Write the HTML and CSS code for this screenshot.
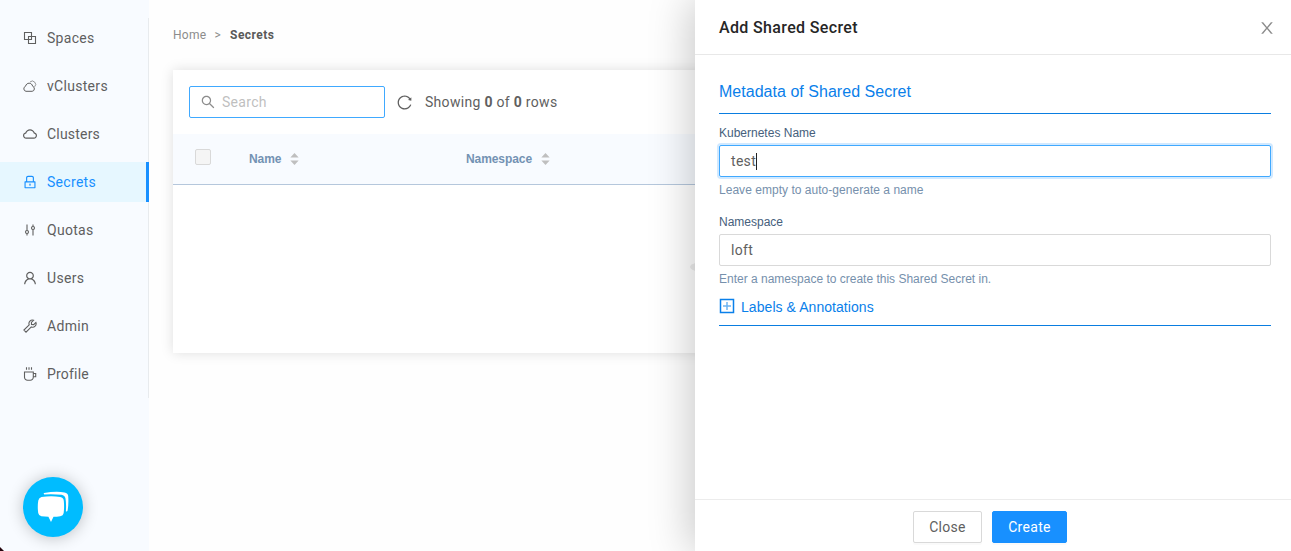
FILE: index.html
```html
<!DOCTYPE html>
<html lang="en">
<head>
<meta charset="utf-8">
<title>Secrets</title>
<link rel="stylesheet" href="styles.css">
</head>
<body>
<div class="app">
  <aside class="sidebar">
    <nav class="menu">
      <a class="item"><svg class="icon line" viewBox="0 0 14 14"><path d="M1.500 1.500h7v7h-7zM5.500 5.500h7v7h-7z"/></svg><span>Spaces</span></a>
      <a class="item"><svg class="icon line thin" viewBox="0 0 14 14"><path d="M3 12.300a2.600 2.600 0 0 1-.5-5C3 5.300 4.400 4.200 6.100 4.200s3.100 1.100 3.600 3.100a2.600 2.600 0 0 1-.5 5z"/><path class="faint" d="M7 3a3.200 3.200 0 1 1 4.600 4.800"/></svg><span>vClusters</span></a>
      <a class="item"><svg class="icon" viewBox="64 64 896 896"><path d="M811.4 418.7C765.6 297.9 648.9 212 512.2 212S258.8 297.8 213 418.6C127.3 441.1 64 519.1 64 612c0 110.500 89.500 200 199.900 200h496.200C870.500 812 960 722.500 960 612c0-92.700-63.100-170.700-148.600-193.300zm36.300 281a123.070 123.070 0 0 1-87.600 36.300H263.900c-33.100 0-64.200-12.900-87.600-36.300A123.300 123.300 0 0 1 140 612c0-28 9.100-54.300 26.200-76.300a125.700 125.700 0 0 1 66.100-43.700l37.900-9.900 13.900-36.600c8.600-22.800 20.600-44.100 35.700-63.400a245.600 245.600 0 0 1 52.400-49.900c41.100-28.900 89.500-44.200 140-44.200s98.900 15.300 140 44.200c19.900 14 37.500 30.800 52.400 49.900 15.100 19.300 27.100 40.700 35.700 63.400l13.800 36.500 37.800 10c54.300 14.500 92.100 63.800 92.100 120 0 33.100-12.900 64.300-36.300 87.700z"/></svg><span class="tight">Clusters</span></a>
      <a class="item active"><svg class="icon" viewBox="64 64 896 896"><path d="M832 464h-68V240c0-70.700-57.300-128-128-128H388c-70.700 0-128 57.300-128 128v224h-68c-17.700 0-32 14.300-32 32v384c0 17.700 14.300 32 32 32h640c17.700 0 32-14.300 32-32V496c0-17.700-14.300-32-32-32zM332 240c0-30.900 25.100-56 56-56h248c30.900 0 56 25.100 56 56v224H332V240zm460 600H232V536h560v304zM484 701v53c0 4.400 3.600 8 8 8h40c4.400 0 8-3.600 8-8v-53a48.010 48.010 0 1 0-56 0z"/></svg><span>Secrets</span></a>
      <a class="item"><svg class="icon line" viewBox="0 0 14 14"><path d="M4 1.500v6M4 10.500v2M10 1.500v2M10 6.500v6"/><circle cx="4" cy="9" r="1.500"/><circle cx="10" cy="5" r="1.500"/></svg><span>Quotas</span></a>
      <a class="item"><svg class="icon" viewBox="64 64 896 896"><path d="M858.500 763.600a374 374 0 0 0-80.600-119.500 375.630 375.630 0 0 0-119.500-80.600c-.4-.2-.8-.3-1.200-.5C719.500 518 760 444.700 760 362c0-137-111-248-248-248S264 225 264 362c0 82.700 40.500 156 102.800 201.100-.4.2-.8.3-1.200.5-44.800 18.900-85 46-119.500 80.600a375.630 375.630 0 0 0-80.600 119.500A371.700 371.700 0 0 0 136 901.800a8 8 0 0 0 8 8.200h60c4.400 0 7.900-3.500 8-7.800 2-77.200 33-149.500 87.800-204.300 56.700-56.700 132-87.900 212.200-87.900s155.500 31.200 212.200 87.900C779 752.700 810 825 812 902.200c.1 4.400 3.600 7.800 8 7.800h60a8 8 0 0 0 8-8.200c-1-47.800-10.900-94.300-29.500-138.200zM512 534c-45.900 0-89.100-17.900-121.600-50.400S340 407.900 340 362c0-45.900 17.900-89.100 50.400-121.600S466.100 190 512 190s89.100 17.900 121.600 50.400S684 316.100 684 362c0 45.900-17.900 89.100-50.400 121.600S557.900 534 512 534z"/></svg><span>Users</span></a>
      <a class="item"><svg class="icon line" viewBox="0 0 14 14"><path d="M10.600 1.200a3.500 3.500 0 0 0-4.400 4.600L.9 11.100l2.100 2.100 5.300-5.300a3.500 3.500 0 0 0 4.600-4.500l-2.200 2.200-2.200-.1-.1-2.100z"/></svg><span>Admin</span></a>
      <a class="item"><svg class="icon line" viewBox="0 0 14 14"><path d="M1.500 5h8.800v5.200a3 3 0 0 1-3 3H4.500a3 3 0 0 1-3-3zM10.500 6.500h2.200v3.200h-2.200M3.500.2v2.600M6 .2v2.600M8.500.2v2.600"/></svg><span class="tight">Profile</span></a>
    </nav>
    <button class="chat" aria-label="Chat">
      <svg viewBox="0 0 60 60"><path d="M21 16q12-2.200 20.500-.6Q45 16 45.200 19q.6 8-.6 14.600-.7 1.400-1.700.6.500-7.200-.4-12.600-.7-3.400-4-3.800-8.500-1-17.200-.4-1-.8-.3-1.400z"/><path d="M18.500 20q10-1.500 18.700 0 3.300.5 3.600 3.700.6 6.300-.1 12-.5 3-3.500 3.500-3.400.5-6.700.6L28 45l-2.600-5.200-7-.5q-2.700-.4-3.200-3.300-.9-6.500.1-12.500.6-3 3.200-3.500z"/></svg>
    </button>
    <i class="corner"></i>
  </aside>

  <main class="main">
    <div class="crumbs"><span>Home</span><span class="sep">&gt;</span><b>Secrets</b></div>
    <section class="card">
      <div class="toolbar">
        <div class="search"><svg viewBox="64 64 896 896"><path d="M909.600 854.500L649.900 594.800C690.200 542.700 712 479 712 412c0-80.200-31.300-155.400-87.900-212.100-56.600-56.700-132-87.900-212.100-87.900s-155.500 31.300-212.100 87.900C143.200 256.500 112 331.800 112 412c0 80.100 31.300 155.500 87.900 212.100C256.500 680.800 331.800 712 412 712c67 0 130.600-21.800 182.700-62l259.700 259.600a8.200 8.200 0 0 0 11.600 0l43.600-43.500a8.200 8.200 0 0 0 0-11.600zM570.400 570.400C528 612.700 471.800 636 412 636s-116-23.300-158.400-65.600C211.300 528 188 471.800 188 412s23.300-116.100 65.600-158.400C296 211.300 352.200 188 412 188s116.100 23.200 158.400 65.600S636 352.200 636 412s-23.300 116.100-65.600 158.400z"/></svg><span>Search</span></div>
        <svg class="reload" viewBox="64 64 896 896"><path d="M909.100 209.300l-56.400 44.100C775.800 155.100 656.200 92 521.900 92 290 92 102.300 279.500 102 511.500 101.700 743.700 289.800 932 521.900 932c181.300 0 335.800-115 394.600-276.100 1.500-4.200-.7-8.900-4.900-10.300l-56.700-19.500a8 8 0 0 0-10.100 4.800c-1.800 5-3.800 10-5.900 14.900-17.300 41-42.100 77.800-73.700 109.400A344.770 344.770 0 0 1 655.900 829c-42.300 17.900-87.400 27-133.800 27-46.500 0-91.500-9.100-133.800-27A341.500 341.500 0 0 1 279 755.200a342.160 342.160 0 0 1-73.700-109.400c-17.900-42.400-27-87.400-27-133.900s9.100-91.500 27-133.900c17.300-41 42.100-77.800 73.700-109.400 31.600-31.600 68.400-56.400 109.300-73.800 42.300-17.900 87.400-27 133.800-27 46.500 0 91.500 9.100 133.800 27a341.500 341.500 0 0 1 109.300 73.800c9.900 9.900 19.200 20.400 27.800 31.400l-60.200 47a8 8 0 0 0 3 14.100l175.600 43c5 1.200 9.900-2.600 9.900-7.700l.8-180.900c-.1-6.600-7.800-10.300-13-6.200z"/></svg>
        <span class="count">Showing <b>0</b> of <b>0</b> rows</span>
      </div>
      <div class="thead">
        <i class="check"></i>
        <div class="col name"><span>Name</span><svg class="sort" viewBox="0 0 9 13"><path d="M4.500 0L9 5H0zM4.500 13L0 8h9z"/></svg></div>
        <div class="col ns"><span>Namespace</span><svg class="sort" viewBox="0 0 9 13"><path d="M4.500 0L9 5H0zM4.500 13L0 8h9z"/></svg></div>
      </div>
      <div class="empty"><svg viewBox="0 0 64 20"><ellipse cx="32" cy="10" rx="32" ry="7"/></svg></div>
    </section>
  </main>

  <section class="drawer">
    <header class="head"><h1>Add Shared Secret</h1><svg viewBox="64 64 896 896"><path d="M563.800 512l262.500-312.900c4.400-5.200.7-13.100-6.100-13.100h-79.800c-4.700 0-9.200 2.100-12.300 5.700L511.600 449.800 295.100 191.700c-3-3.600-7.500-5.700-12.300-5.700H203c-6.800 0-10.500 7.900-6.100 13.100L459.400 512 196.900 824.900A7.950 7.950 0 0 0 203 838h79.800c4.700 0 9.200-2.100 12.300-5.700l216.500-258.100 216.500 258.100c3 3.600 7.500 5.700 12.300 5.700h79.800c6.800 0 10.500-7.900 6.100-13.100L563.800 512z"/></svg></header>
    <div class="body">
      <h2>Metadata of Shared Secret</h2>
      <label>Kubernetes Name</label>
      <div class="field focus"><span>test</span><i class="caret"></i></div>
      <p class="help leave">Leave empty to auto-generate a name</p>
      <label class="second">Namespace</label>
      <div class="field"><span>loft</span></div>
      <p class="help">Enter a namespace to create this Shared Secret in.</p>
      <div class="labels"><svg viewBox="0 0 16 16"><path d="M1.500 1.500h13v13h-13z"/><path class="plus" d="M8 4v8M4 8h8"/></svg><span>Labels &amp; Annotations</span></div>
    </div>
    <footer class="foot"><button class="btn">Close</button><button class="btn primary">Create</button></footer>
  </section>
</div>
</body>
</html>
```
FILE: styles.css
```css
* { box-sizing: border-box; }
body { margin: 0; font: 14px/20px Roboto, sans-serif; letter-spacing: .3px; color: #5f5f5f; background: #fefefe; overflow: hidden; }
h1, h2, p { margin: 0; font-weight: 400; }
button { font: inherit; letter-spacing: inherit; color: inherit; }
svg { display: block; fill: currentColor; flex: none; }

.app { display: grid; grid-template-columns: 149px 546px 596px; width: 1291px; height: 551px; overflow: hidden; }

.sidebar { position: relative; padding-top: 18px; background: #f8fbff; }
.menu { display: flex; flex-direction: column; gap: 8px; height: 380px; border-right: 1px solid #e8ebee; }
.item { display: flex; align-items: center; gap: 10px; height: 40px; padding-left: 23px; margin-right: -1px; }
.item.active { color: #1890ff; background: #e6f7ff; border-right: 3px solid #1890ff; }
.tight { letter-spacing: .2px; }
.icon { width: 14px; height: 14px; }
.line { fill: none; stroke: currentColor; stroke-width: 1.1; }
.thin { stroke-width: 1; }
.faint { opacity: .65; }
.chat { position: absolute; left: 23px; top: 477px; width: 60px; height: 60px; padding: 0; border: 0; border-radius: 50%; background: #00bcff; color: #fff; box-shadow: 0 1px 16px rgba(0, 0, 0, .24); }
.corner { position: absolute; left: 0; bottom: 0; border-left: 4px solid #24050d; border-top: 4px solid transparent; }

.main { padding: 25px 0 0 24px; }
.crumbs { display: flex; font-size: 12px; color: #8c8c8c; }
.crumbs .sep { margin: 0 8px; }
.crumbs b { margin-left: 1px; font-weight: 700; letter-spacing: .45px; color: #595959; }
.card { width: 1094px; height: 283px; margin-top: 25px; background: #fff; box-shadow: 0 0 12px rgba(0, 0, 0, .13); }
.toolbar { display: flex; align-items: center; height: 64px; padding-left: 16px; }
.search { display: flex; align-items: center; gap: 7px; width: 196px; height: 32px; padding-left: 11px; border: 1px solid #40a9ff; border-radius: 2px; color: #bfbfbf; }
.search svg { width: 14px; height: 14px; color: #8c8c8c; }
.reload { width: 15px; height: 15px; margin: 0 13px 0 12px; }
.count b { font-weight: 700; }
.thead { display: flex; height: 51px; padding: 15px 0 0 22px; background: #f8fbff; border-bottom: 1px solid #b5c7dc; font: 700 12px/20px "Liberation Sans", sans-serif; letter-spacing: -.08px; color: #7392b3; }
.check { width: 16px; height: 16px; border: 1px solid #d9d9d9; border-radius: 2px; background: #f5f5f5; }
.col { display: flex; align-items: center; gap: 9px; height: 20px; }
.name { width: 217px; margin-left: 38px; }
.sort { width: 9px; height: 12px; color: #bfbfbf; }
.empty { display: flex; justify-content: center; padding-top: 72px; }
.empty svg { width: 64px; height: 20px; margin-left: 4px; color: #ededed; }

.drawer { z-index: 1; display: flex; flex-direction: column; background: #fff; box-shadow: -4px 0 40px rgba(0, 0, 0, .22); }
.head { display: flex; align-items: center; justify-content: space-between; height: 55px; padding: 0 16px 0 24px; border-bottom: 1px solid #e8e8e8; }
.head h1 { padding-top: 2px; font-size: 16px; font-weight: 500; letter-spacing: .35px; color: #262626; }
.head svg { width: 16px; height: 16px; margin: 2px 0 0; color: #8c8c8c; }
.body { flex: 1; padding: 24px 20px 0 24px; font-family: "Liberation Sans", sans-serif; letter-spacing: 0; }
.body h2 { height: 35px; padding-top: 2px; border-bottom: 1px solid #0a7de0; font-size: 16px; line-height: 22px; letter-spacing: .03px; color: #0a80ea; }
.body label { display: block; margin-top: 9px; height: 22px; font-size: 12px; line-height: 20px; color: #46607c; }
.body .second { margin-top: 12px; }
.field { display: flex; align-items: center; width: 552px; height: 32px; padding-left: 11px; border: 1px solid #d9d9d9; border-radius: 2px; font-family: Roboto, sans-serif; letter-spacing: .3px; }
.focus { border-color: #40a9ff; box-shadow: 0 0 0 2px rgba(24, 144, 255, .2); }
.caret { width: 1px; height: 17px; background: #222; }
.help { height: 23px; padding-top: 3px; font-size: 12px; line-height: 20px; color: #7690ac; }
.leave { letter-spacing: .03px; }
.labels { display: flex; align-items: center; gap: 6px; width: 552px; height: 37px; border-bottom: 1px solid #0a7de0; font-size: 14px; letter-spacing: .06px; color: #0a80ea; }
.labels svg { width: 16px; height: 16px; margin-top: -2px; fill: none; stroke: currentColor; stroke-width: 1.5; }
.plus { opacity: .6; }
.foot { display: flex; justify-content: center; gap: 10px; height: 52px; padding: 11px 6px 0 0; border-top: 1px solid #ececec; }
.btn { width: 69px; height: 32px; padding: 0; border: 1px solid #d9d9d9; border-radius: 2px; background: #fff; box-shadow: 0 2px 0 rgba(0, 0, 0, .02); }
.primary { width: 75px; border-color: #1890ff; background: #1890ff; color: #fff; }
```
